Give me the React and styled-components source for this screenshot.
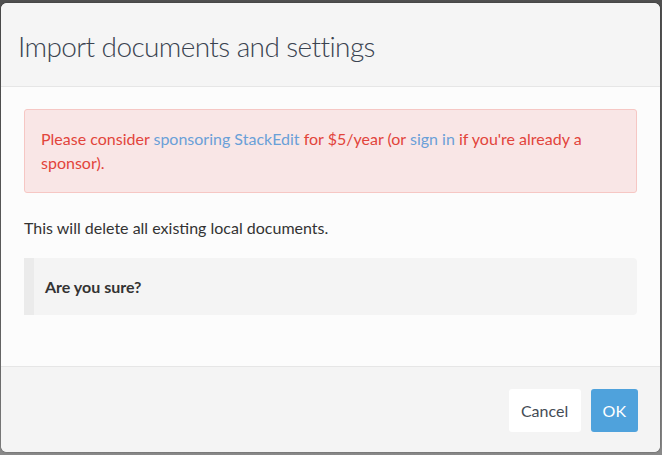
import React from "react";
import styled, { createGlobalStyle } from "styled-components";

const GlobalStyle = createGlobalStyle`
  html, body {
    margin: 0;
    padding: 0;
    background: #4d4d4d;
  }
  body {
    font-family: Lato, "Open Sans", sans-serif;
  }
`;

const Backdrop = styled.div`
  width: 662px;
  height: 455px;
  box-sizing: border-box;
  padding: 3px 2px 3px 1px;
  background: linear-gradient(#505050, #6a6a6a 70%, #8a8a8a);
  display: flex;
  flex-direction: column;
`;

const Modal = styled.div`
  flex: 1;
  display: flex;
  flex-direction: column;
  background: #fcfcfc;
  border-radius: 6px;
  overflow: hidden;
  box-shadow: 0 0 2px rgba(0, 0, 0, 0.4);
`;

const Header = styled.div`
  background: #f5f5f5;
  border-bottom: 1px solid #e6e6e6;
  height: 84px;
  box-sizing: border-box;
  padding: 0 17px;
  display: flex;
  align-items: center;
`;

const Title = styled.h1`
  margin: 0;
  margin-top: 2px;
  font-weight: 300;
  font-size: 28px;
  color: #3a4350;
  letter-spacing: -0.6px;
`;

const Body = styled.div`
  flex: 1;
  padding: 22px 23px 0 23px;
  font-size: 16px;
  color: #333;
`;

const Alert = styled.div`
  background: #f9e6e6;
  border: 1px solid #f6c7c4;
  border-radius: 3px;
  padding: 17px 16px;
  color: #e2443b;
  line-height: 24px;
`;

const Link = styled.a`
  color: #6aa0d8;
  text-decoration: none;
`;

const Paragraph = styled.p`
  margin: 23px 0 18px;
  line-height: 24px;
`;

const Quote = styled.blockquote`
  margin: 0;
  background: #f4f4f4;
  border-left: 10px solid #ebebeb;
  border-radius: 0 4px 4px 0;
  height: 57px;
  box-sizing: border-box;
  padding: 0 11px;
  display: flex;
  align-items: center;
  font-weight: 700;
  color: #333;
`;

const Footer = styled.div`
  background: #f4f4f4;
  border-top: 1px solid #e6e6e6;
  height: 86px;
  box-sizing: border-box;
  padding: 0 22px 0 0;
  display: flex;
  align-items: center;
  justify-content: flex-end;
  gap: 10px;
`;

const Button = styled.button`
  font-family: Lato, "Open Sans", sans-serif;
  font-size: 16px;
  height: 43px;
  margin-top: 1px;
  padding: 0 12px;
  min-width: ${(p) => (p.primary ? "46px" : "72px")};
  border: none;
  border-radius: 3px;
  background: ${(p) => (p.primary ? "#4fa2dc" : "#ffffff")};
  color: ${(p) => (p.primary ? "#ffffff" : "#444b55")};
  cursor: pointer;
`;

export default function App() {
  return (
    <>
      <GlobalStyle />
      <Backdrop>
        <Modal>
          <Header>
            <Title>Import documents and settings</Title>
          </Header>
          <Body>
            <Alert>
              Please consider <Link href="#">sponsoring StackEdit</Link> for $5/year (or{" "}
              <Link href="#">sign in</Link> if you're already a sponsor).
            </Alert>
            <Paragraph>This will delete all existing local documents.</Paragraph>
            <Quote>Are you sure?</Quote>
          </Body>
          <Footer>
            <Button>Cancel</Button>
            <Button primary>OK</Button>
          </Footer>
        </Modal>
      </Backdrop>
    </>
  );
}
